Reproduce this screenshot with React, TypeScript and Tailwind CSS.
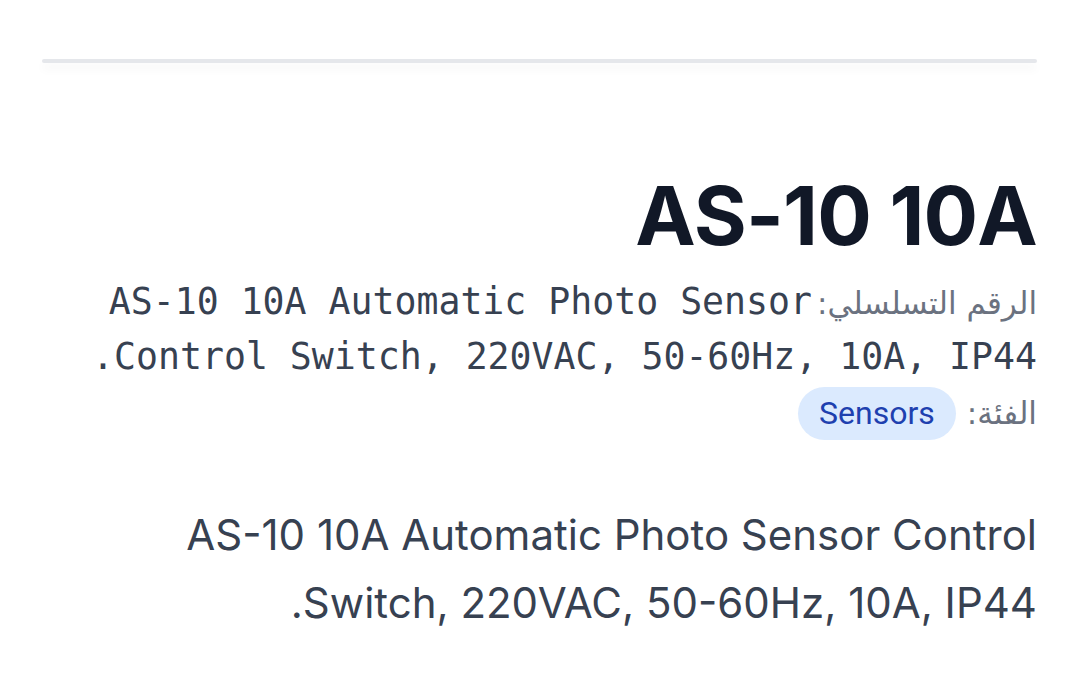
import React from 'react';

const product = {
  name: 'AS-10 10A',
  serial: 'AS-10 10A Automatic Photo Sensor Control Switch, 220VAC, 50-60Hz, 10A, IP44.',
  category: 'Sensors',
  description: 'AS-10 10A Automatic Photo Sensor Control Switch, 220VAC, 50-60Hz, 10A, IP44.',
};

const App = () => {
  return (
    <div dir="rtl" className="min-h-screen w-full bg-white px-[42px] pt-[59px] font-['Inter','Noto_Sans','DejaVu_Sans',sans-serif]">
      {/* Divider */}
      <div className="h-[4px] w-full rounded-full bg-[#e5e7eb] shadow-[0_6px_10px_rgba(0,0,0,0.05)]" />

      <div className="mt-[108px]">
        <h1 className="text-[81px] leading-[90px] font-bold tracking-[-0.01em] text-[#111827]">
          {product.name}
        </h1>

        <p className="mt-[13px] text-[36.5px] leading-[54px] text-[#374151]">
          <span className="pe-[5px] text-[31px] leading-none text-[#6b7280] font-['DejaVu_Sans',sans-serif]">الرقم التسلسلي:</span>
          <span className="font-['DejaVu_Sans_Mono','Liberation_Mono',monospace]">{product.serial}</span>
        </p>

        <div className="mt-[2px] flex items-center gap-[11px]">
          <span className="text-[31px] leading-[54px] text-[#6b7280] font-['DejaVu_Sans',sans-serif]">الفئة:</span>
          <span className="rounded-full bg-[#dbeafe] px-[21px] py-[4px] text-[32px] leading-[45px] font-normal text-[#1e40af] font-['Roboto',sans-serif]">
            {product.category}
          </span>
        </div>

        <p className="mt-[61px] text-[42px] leading-[68px] text-[#374151]">
          {product.description}
        </p>
      </div>
    </div>
  );
};

export default App;
